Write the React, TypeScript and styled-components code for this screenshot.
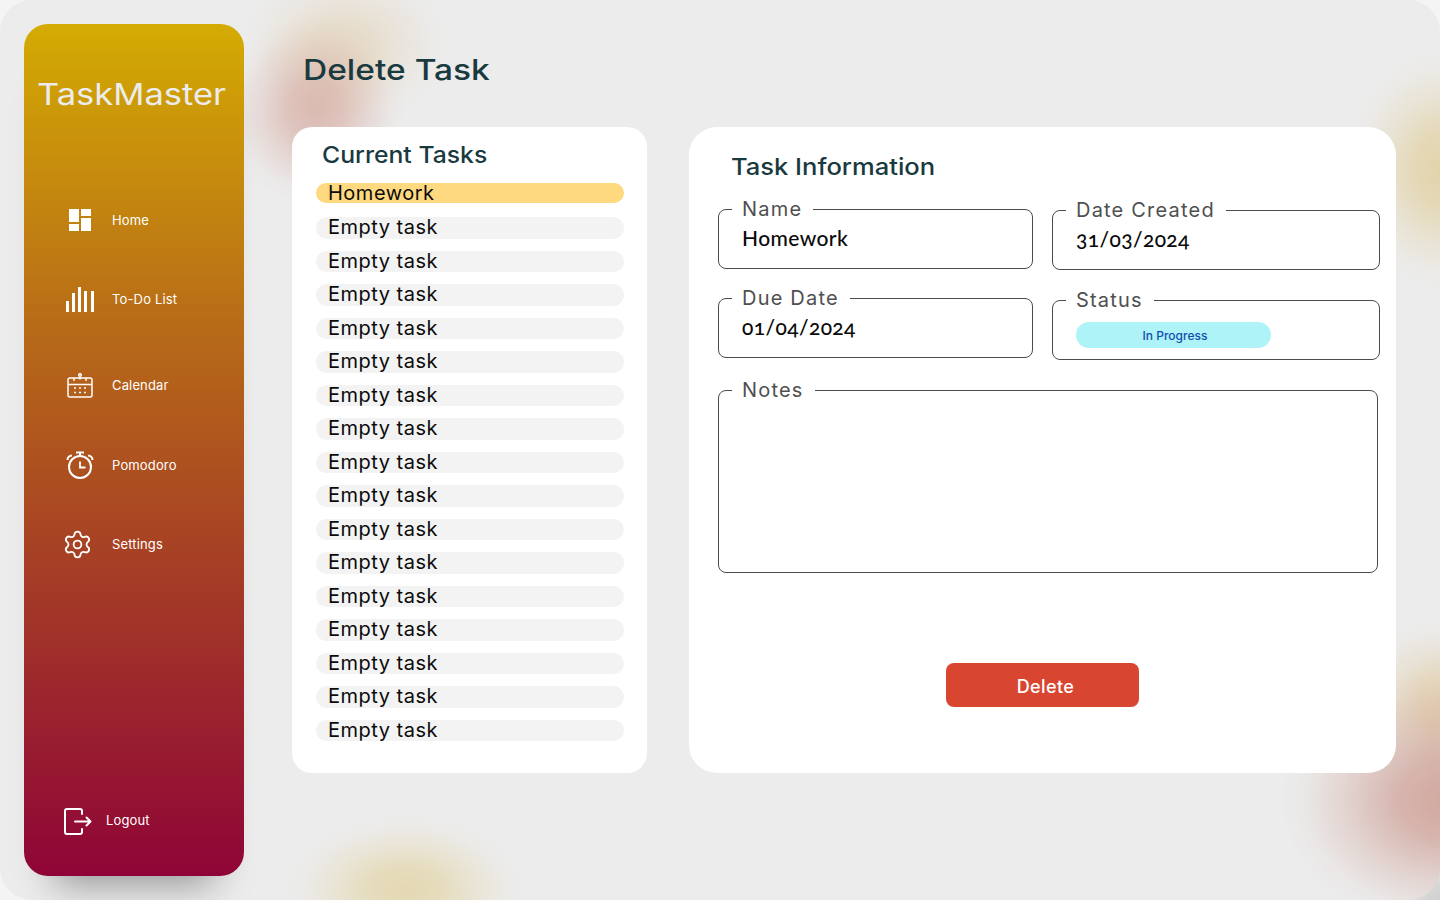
import React from 'react';
import styled, { createGlobalStyle } from 'styled-components';
import { Settings } from 'lucide-react';

const GlobalStyle = createGlobalStyle`
  html {
    margin: 0;
    background: radial-gradient(circle 70px at 100% 100%, #cfcfcf, #f4f4f4);
  }
  body { margin: 0; padding: 0; }
  * { box-sizing: border-box; }
`;

// soft edged colour patch for the page background
const blob = (x: number, y: number, rx: number, ry: number, rgb: string, a: number) =>
  `radial-gradient(ellipse ${rx}px ${ry}px at ${x}px ${y}px, rgba(${rgb}, ${a}) 0%, rgba(${rgb}, ${a * 0.8}) 30%, rgba(${rgb}, ${a * 0.35}) 62%, rgba(${rgb}, ${a * 0.08}) 85%, rgba(${rgb}, 0) 100%)`;

const Frame = styled.div`
  width: 1440px;
  height: 900px;
  overflow: hidden;
  display: flex;
  border-radius: 32px;
  padding: 24px 44px 24px 24px;
  background:
    ${blob(315, 110, 90, 95, '205, 145, 130', 0.55)},
    ${blob(345, 45, 105, 80, '222, 195, 150', 0.42)},
    ${blob(405, 890, 120, 75, '222, 200, 130', 0.55)},
    ${blob(1445, 170, 100, 120, '222, 200, 140', 0.7)},
    ${blob(1450, 800, 170, 130, '190, 120, 105', 0.6)},
    ${blob(1445, 700, 95, 80, '220, 190, 135', 0.55)},
    #ececec;
`;

const Sidebar = styled.aside`
  width: 220px;
  height: 852px;
  flex: none;
  display: flex;
  flex-direction: column;
  border-radius: 24px;
  background: linear-gradient(180deg, #d4ab03 0%, #b76a18 36%, #8f0437 100%);
  box-shadow: 0 38px 36px -30px rgba(0, 0, 0, 0.38);
`;

const Logo = styled.div`
  margin: 51px 0 0 13px;
  font-family: 'Inter', sans-serif;
  font-size: 30px;
  line-height: 38px;
  font-weight: 400;
  color: #ececec;
  white-space: nowrap;
  transform: scaleX(1.15);
  transform-origin: left center;
`;

const Nav = styled.nav`
  display: flex;
  flex-direction: column;
  margin-top: 87px;
`;

const NavItem = styled.a<{ $top: number }>`
  display: flex;
  align-items: center;
  height: 40px;
  margin-top: ${(p) => p.$top}px;
  font-family: 'Inter', sans-serif;
  font-size: 13px;
  letter-spacing: 0.15px;
  color: #fff;
`;

const IconSlot = styled.span`
  width: 88px;
  flex: none;
  display: flex;
  justify-content: center;
  padding-left: 23px;
  color: #fff;
`;

const GearIcon = styled(Settings)`
  margin-left: -5px;
`;

const LogoutItem = styled.a`
  margin: auto 0 41px 40px;
  display: flex;
  align-items: center;
  gap: 14px;
  font-family: 'Inter', sans-serif;
  font-size: 13px;
  letter-spacing: 0.15px;
  color: #fff;

  svg {
    margin-top: 4px;
  }
`;

const Main = styled.main`
  flex: 1;
  display: flex;
  flex-direction: column;
  padding-left: 48px;
`;

const PageTitle = styled.h1`
  margin: 25px 0 0 11px;
  height: 41px;
  font-family: 'Inter', sans-serif;
  font-size: 29px;
  line-height: 41px;
  font-weight: 500;
  color: #193a3f;
  transform: scaleX(1.155);
  transform-origin: left center;
`;

const Panels = styled.div`
  display: flex;
  gap: 42px;
  margin-top: 37px;
`;

const ListPanel = styled.section`
  width: 355px;
  height: 646px;
  background: #fff;
  border-radius: 20px;
  padding: 13px 23px 0 24px;
`;

const PanelTitle = styled.h2<{ $indent: number; $stretch: number }>`
  margin: 0 0 0 ${(p) => p.$indent}px;
  font-family: 'Inter', sans-serif;
  font-size: 23px;
  line-height: 30px;
  font-weight: 500;
  color: #193a3f;
  transform: scaleX(${(p) => p.$stretch});
  transform-origin: left center;
`;

const TaskList = styled.div`
  display: flex;
  flex-direction: column;
  gap: 12px;
  margin-top: 13px;
`;

const TaskRow = styled.div<{ $active?: boolean }>`
  height: ${(p) => (p.$active ? 20 : 21.5)}px;
  margin-bottom: ${(p) => (p.$active ? 2 : 0)}px;
  padding-left: 12px;
  border-radius: 11px;
  background: ${(p) => (p.$active ? '#ffd97f' : '#f3f3f3')};
  font-family: 'Inter', sans-serif;
  font-size: 20px;
  line-height: 20px;
  letter-spacing: 0.5px;
  color: #0b0b0b;
`;

const InfoPanel = styled.section`
  width: 707px;
  height: 646px;
  background: #fff;
  border-radius: 28px;
  padding: 25px 0 0 29px;
`;

const FieldColumns = styled.div`
  display: flex;
  gap: 19px;
  margin-top: 27px;
`;

const FieldColumn = styled.div<{ $width: number; $offset: number; $gap: number }>`
  width: ${(p) => p.$width}px;
  margin-top: ${(p) => p.$offset}px;
  display: flex;
  flex-direction: column;
  gap: ${(p) => p.$gap}px;
`;

const Field = styled.div<{ $height?: number; $width?: string }>`
  position: relative;
  width: ${(p) => p.$width || '100%'};
  height: ${(p) => p.$height || 60}px;
  border: 1px solid #4b4b4b;
  border-radius: 8px;
  padding: 15px 23px 0;
`;

const FieldLabel = styled.span`
  position: absolute;
  top: -13px;
  left: 13px;
  padding: 0 11px 0 10px;
  background: #fff;
  font-family: 'Inter', sans-serif;
  font-size: 20px;
  line-height: 24px;
  letter-spacing: 1.2px;
  color: #4f4f4f;
`;

const FieldValue = styled.div`
  font-family: 'Lato', sans-serif;
  font-variant-numeric: oldstyle-nums;
  font-size: 21px;
  line-height: 26px;
  font-weight: 500;
  letter-spacing: 0.4px;
  color: #0a0a0a;
`;

const StatusPill = styled.div`
  width: 195px;
  height: 26px;
  margin-top: 6px;
  padding-left: 3px;
  border-radius: 13px;
  background: #aef3f7;
  color: #0f4fae;
  font-family: 'Inter', sans-serif;
  font-size: 12px;
  font-weight: 500;
  line-height: 28px;
  text-align: center;
`;

const NotesField = styled(Field)`
  margin-top: 30px;
`;

const DeleteRow = styled.div`
  margin: 90px 0 0 228px;
`;

const DeleteButton = styled.button`
  width: 193px;
  height: 44px;
  padding: 3px 0 0 6px;
  border: none;
  border-radius: 8px;
  background: #d84632;
  color: #fff;
  font-family: 'Inter', sans-serif;
  font-size: 18px;
  font-weight: 500;
  letter-spacing: 0.4px;
`;

const HomeIcon = () => (
  <svg width="22" height="22" viewBox="0 0 22 22" fill="currentColor">
    <rect x="0" y="0" width="10" height="13" />
    <rect x="12" y="0" width="10" height="7" />
    <rect x="0" y="15" width="10" height="7" />
    <rect x="12" y="9" width="10" height="13" />
  </svg>
);

const TodoIcon = () => (
  <svg width="28" height="25" viewBox="0 0 28 25" fill="currentColor">
    <rect x="0" y="14" width="3" height="11" />
    <rect x="6" y="6" width="3" height="19" />
    <rect x="12" y="0" width="3" height="25" />
    <rect x="18" y="4" width="3" height="21" />
    <rect x="25" y="4" width="3" height="21" />
  </svg>
);

const CalendarIcon = () => (
  <svg width="26" height="25" viewBox="0 0 26 25" fill="none" stroke="currentColor" strokeWidth="1.5">
    <rect x="1" y="5" width="24" height="19" rx="2" />
    <path d="M1 11.5h24M7 5v3M19 5v3M13 3.5v3" />
    <circle cx="13" cy="2" r="1.3" />
    <path d="M7 15h2M12 15h2M17 15h2M7 19.5h2M12 19.5h2M17 19.5h2" strokeWidth="1.6" />
  </svg>
);

const PomodoroIcon = () => (
  <svg width="28" height="28" viewBox="0 0 28 28" fill="none" stroke="currentColor" strokeWidth="2">
    <circle cx="14" cy="16" r="11" />
    <path d="M10 1.5h8M14 1.5v3.5" />
    <path d="M1.5 9c0-2.5 2-4.5 4.5-4.5M26.5 9c0-2.5-2-4.5-4.5-4.5" />
    <path d="M14 10.5v6h5.5" strokeWidth="1.8" />
  </svg>
);

const LogoutIcon = () => (
  <svg width="28" height="27" viewBox="0 0 28 27" fill="none" stroke="currentColor" strokeWidth="2" strokeLinecap="round" strokeLinejoin="round">
    <path d="M18 6V3a2 2 0 0 0-2-2H3a2 2 0 0 0-2 2v21a2 2 0 0 0 2 2h13a2 2 0 0 0 2-2v-3" />
    <path d="M11 13.5h15.5M22.5 9.5l4 4-4 4" />
  </svg>
);

const navItems = [
  { label: 'Home', icon: <HomeIcon />, top: 0 },
  { label: 'To-Do List', icon: <TodoIcon />, top: 39 },
  { label: 'Calendar', icon: <CalendarIcon />, top: 46 },
  { label: 'Pomodoro', icon: <PomodoroIcon />, top: 40 },
  { label: 'Settings', icon: <GearIcon size={31} strokeWidth={1.4} />, top: 39 },
];

const tasks = ['Homework', ...Array(16).fill('Empty task')];

export default function App() {
  return (
    <Frame>
      <GlobalStyle />
      <Sidebar>
        <Logo>TaskMaster</Logo>
        <Nav>
          {navItems.map((item) => (
            <NavItem key={item.label} $top={item.top}>
              <IconSlot>{item.icon}</IconSlot>
              {item.label}
            </NavItem>
          ))}
        </Nav>
        <LogoutItem>
          <LogoutIcon />
          Logout
        </LogoutItem>
      </Sidebar>
      <Main>
        <PageTitle>Delete Task</PageTitle>
        <Panels>
          <ListPanel>
            <PanelTitle $indent={6} $stretch={1.075}>Current Tasks</PanelTitle>
            <TaskList>
              {tasks.map((task, i) => (
                <TaskRow key={i} $active={i === 0}>
                  {task}
                </TaskRow>
              ))}
            </TaskList>
          </ListPanel>
          <InfoPanel>
            <PanelTitle $indent={13} $stretch={1.11}>Task Information</PanelTitle>
            <FieldColumns>
              <FieldColumn $width={315} $offset={0} $gap={29}>
                <Field>
                  <FieldLabel>Name</FieldLabel>
                  <FieldValue>Homework</FieldValue>
                </Field>
                <Field>
                  <FieldLabel>Due Date</FieldLabel>
                  <FieldValue>01/04/2024</FieldValue>
                </Field>
              </FieldColumn>
              <FieldColumn $width={328} $offset={1} $gap={30}>
                <Field>
                  <FieldLabel>Date Created</FieldLabel>
                  <FieldValue>31/03/2024</FieldValue>
                </Field>
                <Field>
                  <FieldLabel>Status</FieldLabel>
                  <StatusPill>In Progress</StatusPill>
                </Field>
              </FieldColumn>
            </FieldColumns>
            <NotesField $height={183} $width="660px">
              <FieldLabel>Notes</FieldLabel>
            </NotesField>
            <DeleteRow>
              <DeleteButton>Delete</DeleteButton>
            </DeleteRow>
          </InfoPanel>
        </Panels>
      </Main>
    </Frame>
  );
}
